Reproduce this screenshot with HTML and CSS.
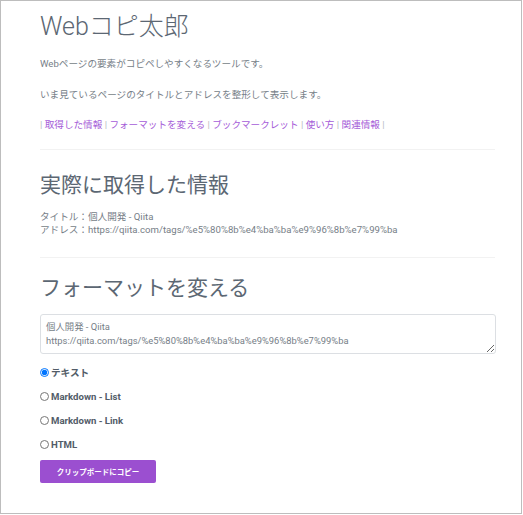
FILE: index.html
```html
<!DOCTYPE html>
<html lang="ja">
<head>
<meta charset="utf-8">
<title>Webコピ太郎</title>
<link rel="stylesheet" href="styles.css">
</head>
<body>
<div class="frame">
  <main class="container">
    <h1 class="title">Webコピ太郎</h1>
    <p class="lead">Webページの要素がコピペしやすくなるツールです。</p>
    <p class="lead">いま見ているページのタイトルとアドレスを整形して表示します。</p>
    <nav class="links">
      <span class="sep">|</span> <a href="#">取得した情報</a> <span class="sep">|</span> <a href="#">フォーマットを変える</a> <span class="sep">|</span> <a href="#">ブックマークレット</a> <span class="sep">|</span> <a href="#">使い方</a> <span class="sep">|</span> <a href="#">関連情報</a> <span class="sep">|</span>
    </nav>
    <hr class="rule">
    <h2 class="heading">実際に取得した情報</h2>
    <div class="info">
      <div>タイトル：個人開発 - Qiita</div>
      <div>アドレス：https://qiita.com/tags/%e5%80%8b%e4%ba%ba%e9%96%8b%e7%99%ba</div>
    </div>
    <hr class="rule rule-2">
    <h2 class="heading heading-2">フォーマットを変える</h2>
    <textarea class="output" rows="2">個人開発 - Qiita
https://qiita.com/tags/%e5%80%8b%e4%ba%ba%e9%96%8b%e7%99%ba</textarea>
    <div class="options">
      <label class="option"><input type="radio" name="fmt" checked> テキスト</label>
      <label class="option"><input type="radio" name="fmt"> Markdown - List</label>
      <label class="option"><input type="radio" name="fmt"> Markdown - Link</label>
      <label class="option"><input type="radio" name="fmt"> HTML</label>
    </div>
    <button class="copy" type="button">クリップボードにコピー</button>
  </main>
</div>
</body>
</html>
```

FILE: styles.css
```css
* { box-sizing: border-box; }
html, body { margin: 0; padding: 0; background: #fff; }
body {
  font-family: Roboto, "Noto Sans CJK JP", sans-serif;
  font-size: 9.6px;
  color: #767e87;
}
.frame {
  width: 522px;
  height: 514px;
  border: 1px solid #bdbdbd;
  overflow: hidden;
}
.container {
  padding: 0 26px 0 39px;
}
.title {
  margin: 10px 0 0;
  font-size: 25px;
  font-weight: 300;
  line-height: 32px;
  color: #5c6773;
}
.lead {
  margin: 13px 0 0;
  line-height: 16px;
}
.lead + .lead { margin-top: 15px; }
.links {
  margin-top: 14px;
  line-height: 16px;
}
.links a { color: #a55cd8; text-decoration: none; }
.sep { color: #b8bcc2; }
.rule {
  border: 0;
  border-top: 1px solid #f2f2f2;
  margin: 16px 0 0;
}
.heading {
  margin: 23px 0 0;
  font-size: 21px;
  font-weight: 400;
  line-height: 25px;
  color: #5c6773;
}
.info {
  margin-top: 12px;
  line-height: 13px;
}
.rule-2 { margin-top: 21px; }
.heading-2 { margin-top: 18px; }
.output {
  display: block;
  width: 456px;
  height: 40px;
  margin-top: 13px;
  padding: 5px 5px;
  border: 1px solid #dcdfe3;
  border-radius: 3px;
  font-family: Roboto, "Noto Sans CJK JP", sans-serif;
  font-size: 9.4px;
  line-height: 14px;
  color: #767e87;
  resize: vertical;
  overflow: hidden;
}
.options {
  display: flex;
  flex-direction: column;
  gap: 8px;
  margin-top: 10px;
}
.option {
  display: flex;
  align-items: center;
  gap: 2px;
  height: 16px;
  font-size: 9.6px;
  font-weight: 700;
  color: #525c68;
}
.option input {
  margin: 0;
  width: 9px;
  height: 9px;
}
.copy {
  display: block;
  margin-top: 8px;
  width: 116px;
  height: 23px;
  border: 0;
  border-radius: 2px;
  background: #9b4fd0;
  color: #fff;
  font-family: Roboto, "Noto Sans CJK JP", sans-serif;
  font-size: 7.5px;
  font-weight: 700;
}
```
